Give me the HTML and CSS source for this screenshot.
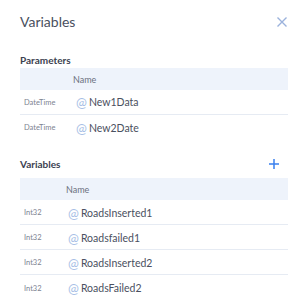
FILE: index.html
```html
<!DOCTYPE html>
<html lang="en">
<head>
    <meta charset="UTF-8">
    <title>Variables</title>
    <link rel="stylesheet" href="styles.css">
</head>
<body>
    <div class="panel">
        <div class="panel-head">
            <h1 class="panel-title">Variables</h1>
            <button class="icon-btn close-btn" aria-label="Close">
                <svg width="10" height="10" viewBox="0 0 10 10"><path d="M0.5 0.5L9.5 9.5M9.5 0.5L0.5 9.5" stroke="#9bb2dc" stroke-width="1.4" fill="none"/></svg>
            </button>
        </div>

        <section class="group">
            <div class="group-head">
                <h2 class="group-title">Parameters</h2>
            </div>
            <div class="var-table params">
                <div class="var-row var-header">
                    <span class="col-type"></span>
                    <span class="col-name">Name</span>
                </div>
                <div class="var-row">
                    <span class="col-type">DateTime</span>
                    <span class="col-name"><i class="at">@</i>New1Data</span>
                </div>
                <div class="var-row">
                    <span class="col-type">DateTime</span>
                    <span class="col-name"><i class="at">@</i>New2Date</span>
                </div>
            </div>
        </section>

        <section class="group">
            <div class="group-head">
                <h2 class="group-title">Variables</h2>
                <button class="icon-btn add-btn" aria-label="Add">
                    <svg width="10" height="10" viewBox="0 0 10 10"><path d="M5 0V10M0 5H10" stroke="#3a80ee" stroke-width="1.5" fill="none"/></svg>
                </button>
            </div>
            <div class="var-table vars">
                <div class="var-row var-header">
                    <span class="col-type"></span>
                    <span class="col-name">Name</span>
                </div>
                <div class="var-row">
                    <span class="col-type">Int32</span>
                    <span class="col-name"><i class="at">@</i>RoadsInserted1</span>
                </div>
                <div class="var-row">
                    <span class="col-type">Int32</span>
                    <span class="col-name"><i class="at">@</i>Roadsfailed1</span>
                </div>
                <div class="var-row">
                    <span class="col-type">Int32</span>
                    <span class="col-name"><i class="at">@</i>RoadsInserted2</span>
                </div>
                <div class="var-row">
                    <span class="col-type">Int32</span>
                    <span class="col-name"><i class="at">@</i>RoadsFailed2</span>
                </div>
            </div>
        </section>
    </div>
</body>
</html>
```

FILE: styles.css
```css
* {
    margin: 0;
    padding: 0;
    box-sizing: border-box;
}

body {
    font-family: Lato, 'Open Sans', sans-serif;
    color: #3a3f4a;
    background: #fff;
}

.panel {
    width: 300px;
    height: 308px;
    padding: 12px 12px 0 20px;
}

.panel-head {
    display: flex;
    align-items: center;
    justify-content: space-between;
    height: 18px;
}

.panel-title {
    font-size: 14px;
    font-weight: 400;
    color: #4a5060;
}

.icon-btn {
    border: none;
    background: none;
    display: flex;
    align-items: center;
    justify-content: center;
    cursor: pointer;
}

.close-btn {
    width: 10px;
    height: 10px;
    margin-right: 1px;
    margin-top: 2px;
}

/* Sections */
.group {
    margin-top: 23px;
}

.group-head {
    display: flex;
    align-items: center;
    justify-content: space-between;
    height: 14px;
    margin-bottom: 1px;
}

.group + .group {
    margin-top: 13px;
}

.group + .group .group-head {
    height: 22px;
    margin-bottom: 3px;
}

.group-title {
    font-size: 10px;
    font-weight: 700;
    color: #3b4150;
}

.add-btn {
    width: 10px;
    height: 10px;
    margin-right: 9px;
}

/* Tables */
.var-table {
    width: 268px;
}

.var-row {
    display: flex;
    align-items: center;
    height: 25px;
    border-bottom: 1px solid #e6ebf3;
}

.var-row:last-child {
    border-bottom: none;
}

.var-header {
    height: 22px;
    background: #eef3fb;
    border-bottom: none;
}

.var-header .col-name {
    font-size: 9px;
    color: #6b7180;
}

.col-type {
    font-size: 7.5px;
    color: #7c8291;
    padding-left: 4px;
    flex-shrink: 0;
}

.params .col-type {
    width: 53px;
}

.vars .col-type {
    width: 46px;
}

.vars .var-row:not(.var-header) {
    padding-top: 1px;
}

.col-name {
    font-size: 10.5px;
    color: #4a5060;
    display: flex;
    align-items: center;
}

.at {
    font-style: normal;
    font-size: 13px;
    color: #a8bfe6;
    margin-left: 3px;
    margin-right: 2px;
}

.vars .at {
    margin-left: 2px;
}
```
